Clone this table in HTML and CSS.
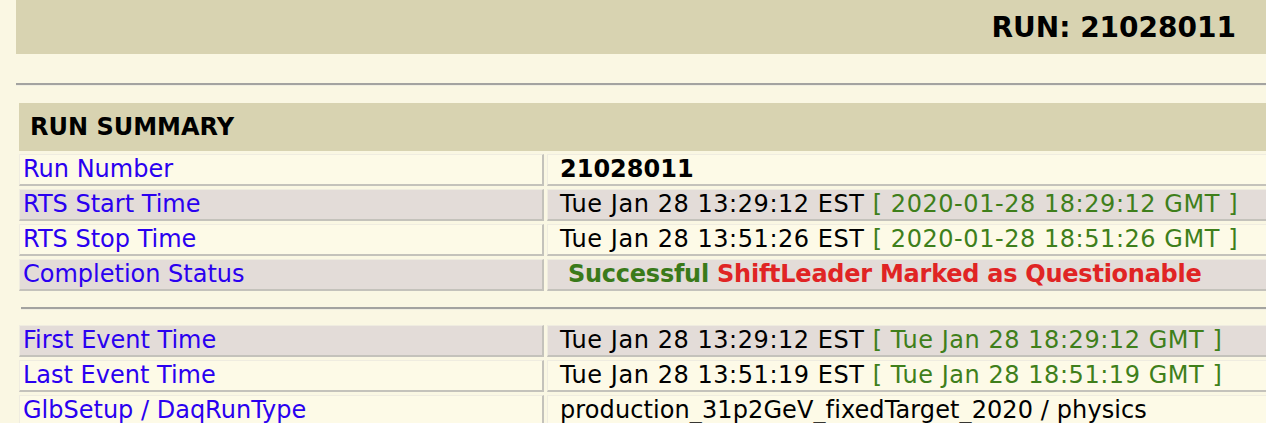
FILE: index.html
```html
<!DOCTYPE html>
<html>
<head>
<meta charset="utf-8">
<link rel="stylesheet" href="styles.css">
</head>
<body>
<div class="page">
  <div class="topbar"><span class="runtitle">RUN: 21028011</span></div>
  <hr class="sep">
  <table class="summary">
    <tr><th colspan="2" class="head">RUN SUMMARY</th></tr>
    <tr class="light"><td class="lbl">Run Number</td><td class="val"><b>21028011</b></td></tr>
    <tr class="dark"><td class="lbl">RTS Start Time</td><td class="val time">Tue Jan 28 13:29:12 EST <span class="gmt">[ 2020-01-28 18:29:12 GMT ]</span></td></tr>
    <tr class="light"><td class="lbl">RTS Stop Time</td><td class="val time">Tue Jan 28 13:51:26 EST <span class="gmt">[ 2020-01-28 18:51:26 GMT ]</span></td></tr>
    <tr class="dark"><td class="lbl">Completion Status</td><td class="val status"><span class="ok">Successful</span> <span class="bad">ShiftLeader Marked as Questionable</span></td></tr>
    <tr><td colspan="2" class="hrcell"><hr class="sep inner"></td></tr>
    <tr class="dark"><td class="lbl">First Event Time</td><td class="val time">Tue Jan 28 13:29:12 EST <span class="gmt">[ Tue Jan 28 18:29:12 GMT ]</span></td></tr>
    <tr class="light"><td class="lbl">Last Event Time</td><td class="val time">Tue Jan 28 13:51:19 EST <span class="gmt">[ Tue Jan 28 18:51:19 GMT ]</span></td></tr>
    <tr class="light"><td class="lbl">GlbSetup / DaqRunType</td><td class="val">production_31p2GeV_fixedTarget_2020 / physics</td></tr>
  </table>
</div>
</body>
</html>
```
FILE: styles.css
```css
html, body {
  margin: 0;
  padding: 0;
  background: #faf7e3;
  overflow: hidden;
}
.page {
  padding-left: 16px;
  width: 1300px;
  font-family: "DejaVu Sans", sans-serif;
  font-size: 24px;
  color: #000;
}
.topbar {
  background: #d8d3b1;
  height: 54px;
  display: flex;
  align-items: center;
  justify-content: flex-end;
  padding-right: 80px;
}
.runtitle {
  font-weight: bold;
  font-size: 28px;
}
.sep {
  margin: 29px 0 0 0;
  border: 0;
  height: 0;
  border-top: 2px solid #a3a3a0;
  border-bottom: 1px solid #f0eee0;
}
.summary {
  margin-top: 14px;
  border-collapse: separate;
  border-spacing: 3px;
  width: 1300px;
}
.head {
  background: #d8d3b1;
  text-align: left;
  height: 48px;
  padding: 0 0 0 11px;
  font-size: 24px;
  font-weight: bold;
}
td {
  padding: 0 0 1px 0;
  height: 32px;
  line-height: 27px;
  box-sizing: border-box;
  border-style: solid;
  border-width: 1px 2px 2px 1px;
  border-color: #efece0 #c4c2bb #c4c2bb #efece0;
  white-space: nowrap;
}
.lbl {
  width: 525px;
  padding-left: 3px;
  color: #2a00f0;
}
.val {
  padding-left: 12px;
  letter-spacing: 0.1px;
}
.val.time { letter-spacing: 0.55px; }
.val b { letter-spacing: 0; }
.light td { background: #fdfae7; }
.dark td { background: #e3dcd8; }
.gmt { color: #3f7f1b; }
.status { font-weight: bold; padding-left: 20px; letter-spacing: -0.25px; }
.ok { color: #3a7a1a; }
.bad { color: #e02424; }
.hrcell {
  border: 0;
  height: 28px;
  padding: 0 0 0 2px;
}
.sep.inner { margin: 0; }
```
